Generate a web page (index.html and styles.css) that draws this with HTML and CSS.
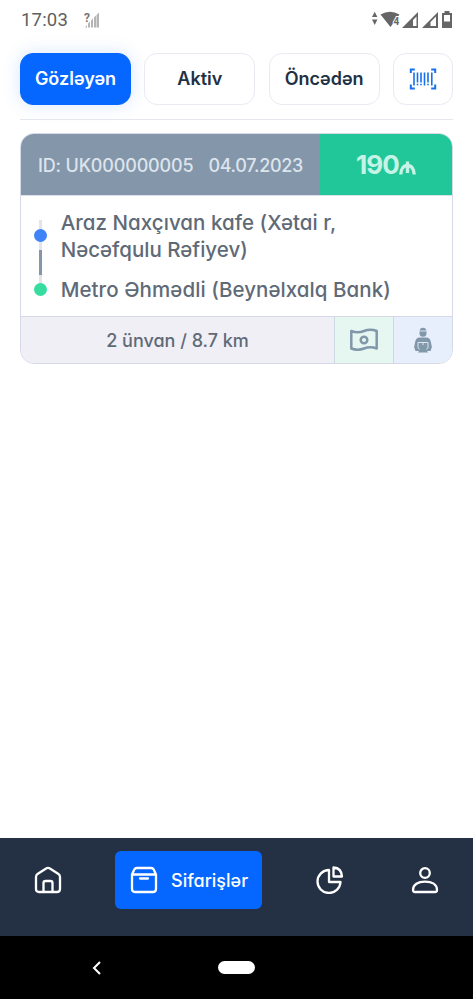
FILE: index.html
```html
<!DOCTYPE html>
<html lang="az">
<head>
<meta charset="utf-8">
<meta name="viewport" content="width=device-width">
<title>Sifarişlər</title>
<link rel="stylesheet" href="styles.css">
</head>
<body>
<div class="status">
  <span class="time">17:03</span>
  <svg class="nosim" width="18" height="18" viewBox="0 0 18 18"><g fill="#b4b4b4"><path d="M1 16.500 3 14v2.500zM4 16.500v-4l2-2v6zM7 16.500V9.500l2-2v9zM10 16.500V6.500l2-2v12z"/><path d="M12.500 16.500V4L15 1.500v15z"/></g><text x="0" y="10.500" class="question">?</text></svg>
  <svg class="indicators" width="82" height="18" viewBox="0 0 82 18">
    <g fill="#666"><path d="M1 6 3.700.800l2.700 5.200zM1 8.500h5.400L3.700 14zM9.500 3.500q9.500-5.500 19 0L19.500 16z"/></g>
    <text x="22.500" y="14" class="wifi">4</text>
    <g fill="#666"><path fill-rule="evenodd" d="M31 17 47 1V17zM42 15h3.500V5.500L42 9z"/><path fill-rule="evenodd" d="M51 17 67 1V17zM59.500 15h5.500V5.500l-5.500 5.500z"/><path fill-rule="evenodd" d="M71 2h2.500V0h5v2H81v15H71zM73 4v6.500h6V4z"/></g>
  </svg>
</div>
<nav class="tabs">
  <button class="tab selected"><span>Gözləyən</span></button>
  <button class="tab"><span>Aktiv</span></button>
  <button class="tab"><span>Öncədən</span></button>
  <button class="tab scan" aria-label="Barkod"><svg width="28" height="24" viewBox="0 0 28 24" fill="none" stroke="#1671ed"><path stroke-width="2" d="M1.800 6V2.500h4M22.200 2.500h4V6M26.200 17.500V21.500h-4M5.800 21.500h-4v-4"/><path stroke-width="1.600" d="M5 5.500v13M8.500 5.500v10M8.500 16.800v1.500M12 5.500v10M12 16.800v1.500M15.500 5.500v13M19 5.500v10M19 16.800v1.500M22.800 5.500v13"/></svg></button>
</nav>
<main>
  <article class="card">
    <header class="card-head">
      <div class="ident"><span class="id">ID: UK000000005</span><span class="date">04.07.2023</span></div>
      <div class="price"><span class="amount">190</span><svg width="17" height="14" viewBox="0 0 17 14" fill="none" stroke="#c5f3e5" stroke-width="3.300"><path d="M1.800 13.500C1.800 8 4.500 4.500 8.500 4.500s6.700 3.500 6.700 9M8.500.5v11.500"/></svg></div>
    </header>
    <div class="route">
      <div class="track"><i class="faint top"></i><i class="dot blue"></i><i class="faint gap"></i><i class="line"></i><i class="faint end"></i><i class="dot green"></i></div>
      <div class="stops">
        <p><span class="s1">Araz Naxçıvan kafe (Xətai r,</span><br><span class="s2">Nəcəfqulu Rəfiyev)</span></p>
        <p><span class="s3">Metro Əhmədli (Beynəlxalq Bank)</span></p>
      </div>
    </div>
    <footer class="card-foot">
      <div class="distance"><span>2 ünvan / 8.7 km</span></div>
      <div class="cash"><svg width="30" height="24" viewBox="0 0 30 24" fill="none" stroke="#8197aa" stroke-width="2.500"><path stroke-linejoin="round" d="M2.300 3q6.300 2.700 12.700 0t12.700 0v17.500q-6.300-2.500-12.700 0t-12.700 0z"/><circle cx="15" cy="12" r="3.300"/></svg></div>
      <div class="courier"><svg width="20" height="26" viewBox="0 0 20 26"><path fill="#8197aa" d="M6.500 4.500a3.500 3.800 0 0 1 7 0v1.700a3.500 3.500 0 0 1-7 0zM6 10.500h8c2 .4 3.300 1.600 3.700 4l1.200 5.500-1.400 4H14l1 1.500H5l1-1.500H2.500l-1.400-4 1.200-5.500c.4-2.400 1.700-3.600 3.700-4z"/><path fill="none" stroke="#e7eefc" stroke-width=".9" d="M6 4h8M5 20.500v-5h10v5M5 20.500l1.500 2M15 20.500l-1.500 2M10 15.500v2.500"/></svg></div>
    </footer>
  </article>
</main>
<nav class="bottom">
  <a class="item"><svg width="28" height="28" viewBox="0 0 28 28"><path d="M2 11q0-2 1.500-3L12.500 2.300q1.500-1 3 0L24.500 8Q26 9 26 11v12q0 3-3 3H5q-3 0-3-3zM9.500 26V17q0-2 2-2h5q2 0 2 2v9"/></svg></a>
  <a class="item active"><svg width="28" height="28" viewBox="0 0 28 28"><path d="M2 8.500 4.300 3.500Q5 2 7 2h14q2 0 2.700 1.500L26 8.500V23q0 3-3 3H5q-3 0-3-3zM2 8.500h24M10 12.500h8"/></svg><span>Sifarişlər</span></a>
  <a class="item"><svg width="28" height="28" viewBox="0 0 28 28"><path d="M13 4v12h11.500A11.500 11.500 0 1 1 13 4zM17.500 1.500q8 .5 8.500 9h-8.500z"/></svg></a>
  <a class="item"><svg width="28" height="28" viewBox="0 0 28 28"><circle cx="14" cy="7" r="4.800"/><path d="M4 26q-2 0-2-2c0-5.500 5-8.300 12-8.300S26 18.500 26 24q0 2-2 2z"/></svg></a>
</nav>
<div class="system"><svg width="12" height="16" viewBox="0 0 12 16" fill="none" stroke="#fff" stroke-width="2"><path d="M9 2 3 8l6 6"/></svg><i class="pill"></i></div>
</body>
</html>
```
FILE: styles.css
```css
* { box-sizing: border-box; }
body { margin: 0; height: 999px; display: flex; flex-direction: column; background: #fff; font-family: Inter, "Noto Sans", sans-serif; font-feature-settings: "cv11" 1; overflow: hidden; }
svg { display: block; flex: none; }
span { white-space: nowrap; }
.status { height: 41px; padding: 11px 20px 0 21px; display: flex; align-items: flex-start; }
.time { font: 400 18.5px/19px Roboto, sans-serif; color: #606060; width: 63px; letter-spacing: .2px; }
.question { font: 700 12px Roboto, sans-serif; fill: #777; }
.indicators { margin-left: auto; }
.wifi { font: 700 10px Roboto, sans-serif; fill: #666; stroke: #fff; stroke-width: 2px; paint-order: stroke; }
.tabs { display: grid; grid-template-columns: 111px 111px 111px 60px; justify-content: space-between; margin: 0 20px; padding-top: 12px; height: 79px; border-bottom: 1px solid #e4e8ee; }
.tab { height: 52px; padding: 0; display: flex; align-items: center; justify-content: center; border: 1px solid #e9eaf4; border-radius: 13px; background: #fff; color: #223044; font: 600 18px/24px Inter, sans-serif; font-feature-settings: "cv11" 1; }
.tab.selected { border-color: #0567ff; background: #0567ff; color: #fff; box-shadow: 0 0 18px rgba(5,103,255,.16); }
main { flex: 1; padding: 13px 20px 0; }
.card { height: 231px; border: 1px solid #d5d9e8; border-radius: 14px; overflow: hidden; display: flex; flex-direction: column; }
.card-head { flex: none; height: 62px; display: flex; border-bottom: 1px solid #dce1ec; }
.ident { width: 299px; display: flex; align-items: center; padding: 1px 0 0 17px; gap: 15px; background: #8496aa; color: #dce4ec; font-size: 18px; font-weight: 500; }
.id { letter-spacing: -.17px; }
.date { letter-spacing: -.3px; }
.price { flex: 1; display: flex; align-items: center; justify-content: center; background: #22c799; color: #c5f3e5; font-size: 26px; font-weight: 700; }
.amount { letter-spacing: -.8px; }
.price svg { margin-top: 7px; }
.route { flex: 1; min-height: 0; display: flex; }
.track { width: 39px; padding-top: 24px; display: flex; flex-direction: column; align-items: center; }
.faint { width: 3px; background: #e1e5eb; }
.faint.top { height: 9px; }
.dot { width: 13px; height: 13px; border-radius: 50%; }
.blue { background: #3f83f8; }
.green { background: #37dca0; }
.faint.gap { height: 8px; }
.line { width: 3px; height: 25px; background: #8496aa; }
.faint.end { height: 8px; }
.stops { padding-top: 13px; font-size: 20.5px; line-height: 27px; font-weight: 500; color: #606a77; }
.stops p { margin: 0 0 13px .7px; }
.s1 { letter-spacing: .04px; }
.s3 { letter-spacing: .07px; }
.card-foot { flex: none; height: 47px; display: flex; border-top: 1px solid #d5d9e8; }
.card-foot > div { display: flex; align-items: center; justify-content: center; }
.distance { width: 313px; background: #efeff5; color: #606a77; font-size: 18px; font-weight: 500; }
.cash { width: 59px; background: #e6f7f2; border-left: 1px solid #cdd9e5; }
.courier { flex: 1; background: #e7eefc; border-left: 1px solid #cdd6e9; }
.bottom { height: 98px; padding-top: 13px; background: #243144; display: grid; grid-template-columns: 96px 186px 95px 96px; justify-items: center; align-items: start; }
.bottom svg { fill: none; stroke: #fff; stroke-width: 2.300px; stroke-linejoin: round; stroke-linecap: round; }
.item { height: 58px; display: flex; align-items: center; }
.active { width: 147px; margin-left: -1px; padding-left: 15px; gap: 13px; border-radius: 6px; background: #0567ff; color: #fff; font-size: 18px; font-weight: 500; }
.system { height: 63px; background: #000; display: flex; align-items: center; padding-left: 91px; }
.pill { width: 37px; height: 13px; margin-left: 115px; border-radius: 7px; background: #fff; }
```
